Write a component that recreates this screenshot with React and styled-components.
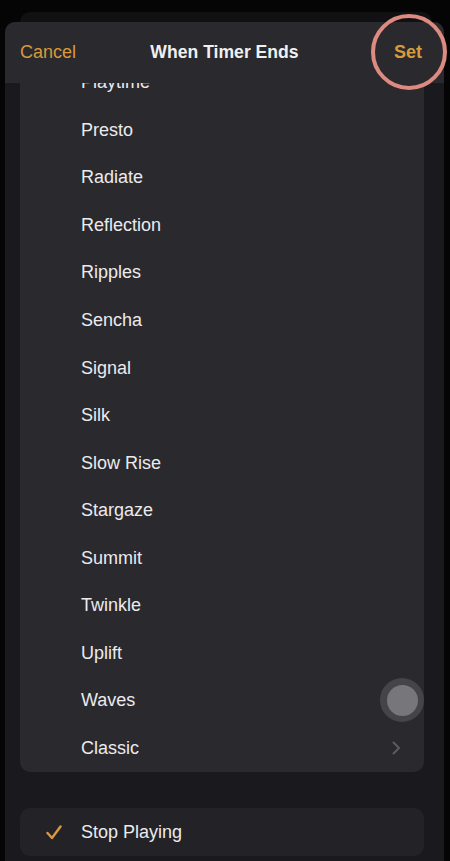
import React from "react";
import styled, { createGlobalStyle } from "styled-components";

const GlobalStyle = createGlobalStyle`
  html, body {
    margin: 0;
    padding: 0;
    background: #050505;
  }
  body {
    font-family: "Liberation Sans", Arial, sans-serif;
    -webkit-font-smoothing: antialiased;
  }
`;

const Screen = styled.div`
  position: relative;
  width: 450px;
  height: 861px;
  overflow: hidden;
  background: #050505;
  padding-top: 12px;
  box-sizing: border-box;
  display: flex;
  flex-direction: column;
`;

const BackLayer = styled.div`
  height: 10px;
  margin: 0 18px 0 20px;
  background: #111013;
  border-radius: 10px 10px 0 0;
`;

const Sheet = styled.div`
  flex: 1;
  margin: 0 6px 0 5px;
  background: #1a191d;
  border-radius: 10px 10px 0 0;
  display: flex;
  flex-direction: column;
  overflow: hidden;
`;

const Header = styled.div`
  position: relative;
  z-index: 2;
  height: 61px;
  flex-shrink: 0;
  display: flex;
  align-items: center;
  justify-content: space-between;
  padding: 0 22px 0 15px;
  background: #2a292d;
`;

const HeaderButton = styled.span`
  color: #d89a3c;
  font-size: 18px;
  font-weight: ${(p) => (p.$bold ? 700 : 400)};
`;

const Title = styled.span`
  color: #f0f0f2;
  font-size: 17.6px;
  font-weight: 700;
  position: absolute;
  left: 0;
  right: 0;
  text-align: center;
  pointer-events: none;
`;

const Body = styled.div`
  flex: 1;
  overflow: hidden;
  display: flex;
  flex-direction: column;
  padding: 0 20px 8px 15px;
`;

const Card = styled.div`
  flex-shrink: 0;
  background: ${(p) => p.$bg || "#2a292d"};
  border-radius: 10px;
  margin-top: ${(p) => p.$top || 0}px;
`;

const Row = styled.div`
  height: ${(p) => p.$h || 47.55}px;
  display: flex;
  align-items: center;
  padding-left: 26px;
  padding-right: 20px;
  color: #ebebed;
  font-size: 18px;
`;

const CheckSlot = styled.span`
  width: 35px;
  display: flex;
  align-items: center;
`;

const Label = styled.span`
  flex: 1;
`;

const Chevron = styled.svg`
  width: 9px;
  height: 14px;
  margin-right: 3px;
`;

const Annotation = styled.div`
  position: absolute;
  left: 371px;
  top: 14px;
  width: 76px;
  height: 76px;
  border: 4px solid #dd8a80;
  border-radius: 50%;
  box-sizing: border-box;
  z-index: 5;
`;

const TouchDot = styled.div`
  position: absolute;
  left: 380px;
  top: 678px;
  width: 44px;
  height: 44px;
  border-radius: 50%;
  background: rgba(120, 119, 124, 0.35);
  display: flex;
  align-items: center;
  justify-content: center;
  z-index: 5;

  &::after {
    content: "";
    width: 31px;
    height: 31px;
    border-radius: 50%;
    background: #77767b;
  }
`;

const sounds = [
  "Playtime",
  "Presto",
  "Radiate",
  "Reflection",
  "Ripples",
  "Sencha",
  "Signal",
  "Silk",
  "Slow Rise",
  "Stargaze",
  "Summit",
  "Twinkle",
  "Uplift",
  "Waves",
];

export default function App() {
  return (
    <Screen>
      <GlobalStyle />
      <BackLayer />
      <Sheet>
        <Header>
          <HeaderButton>Cancel</HeaderButton>
          <Title>When Timer Ends</Title>
          <HeaderButton $bold>Set</HeaderButton>
        </Header>
        <Body>
          <Card $top={-24}>
            {sounds.map((name) => (
              <Row key={name}>
                <CheckSlot />
                <Label>{name}</Label>
              </Row>
            ))}
            <Row>
              <CheckSlot />
              <Label>Classic</Label>
              <Chevron viewBox="0 0 9 14">
                <polyline
                  points="1.5,1.5 7,7 1.5,12.5"
                  fill="none"
                  stroke="#5c5b60"
                  strokeWidth="2"
                  strokeLinecap="round"
                  strokeLinejoin="round"
                />
              </Chevron>
            </Row>
          </Card>
          <Card $top={36} $bg="#232226">
            <Row $h={48}>
              <CheckSlot>
                <svg width="16" height="15" viewBox="0 0 16 15">
                  <polyline
                    points="1.5,8 6,13 14.5,1.5"
                    fill="none"
                    stroke="#d89a3c"
                    strokeWidth="2.4"
                    strokeLinecap="round"
                    strokeLinejoin="round"
                  />
                </svg>
              </CheckSlot>
              <Label>Stop Playing</Label>
            </Row>
          </Card>
        </Body>
      </Sheet>
      <Annotation />
      <TouchDot />
    </Screen>
  );
}
